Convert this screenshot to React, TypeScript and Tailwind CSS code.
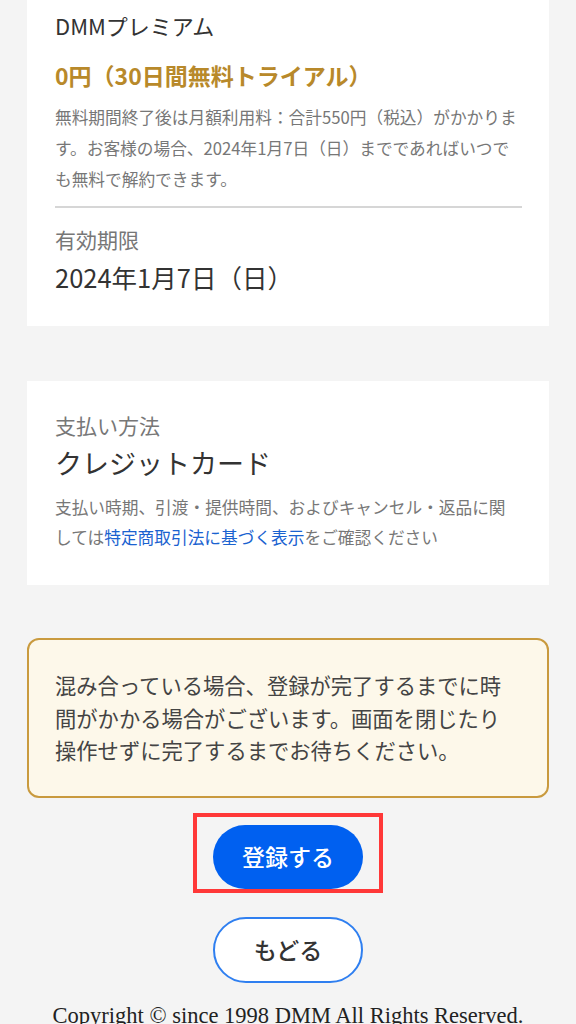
import React from "react";

const jp = { fontFamily: '"Noto Sans CJK JP", "Noto Sans", sans-serif' };

function Card({ children, className = "" }: { children: React.ReactNode; className?: string }) {
  return <section className={`mx-[27px] bg-white pl-[28px] pr-[27px] ${className}`}>{children}</section>;
}

export default function App() {
  return (
    <div className="min-h-[1024px] w-[576px] overflow-hidden bg-[#f4f4f4]" style={jp}>
      <Card className="pt-[10px] pb-[33px]">
        <h2 className="text-[22px] leading-[30px] text-[#333]">DMMプレミアム</h2>
        <p className="mt-[20px] text-[23px] font-bold leading-[30px] text-[#b8892a]">0円（30日間無料トライアル）</p>
        <p className="mt-[12px] text-[16.7px] leading-[31px] text-[#777]">
          無料期間終了後は月額利用料：合計550円（税込）がかかりま
          <br />
          す。お客様の場合、2024年1月7日（日）までであればいつで
          <br />
          も無料で解約できます。
        </p>
        <hr className="mt-[11px] border-t-2 border-[#d6d6d6]" />
        <p className="mt-[18px] text-[21px] leading-[26px] text-[#777]">有効期限</p>
        <p className="mt-[9px] text-[25.5px] leading-[32px] text-[#333]">2024年1月7日（日）</p>
      </Card>

      <Card className="mt-[55px] pt-[31px] pb-[33px]">
        <p className="text-[21px] leading-[26px] text-[#777]">支払い方法</p>
        <p className="mt-[8px] text-[27px] leading-[34px] text-[#333]">クレジットカード</p>
        <p className="mt-[12px] text-[16.7px] leading-[30px] text-[#777]">
          支払い時期、引渡・提供時間、およびキャンセル・返品に関
          <br />
          しては<span className="text-[#1a62d0]">特定商取引法に基づく表示</span>をご確認ください
        </p>
      </Card>

      <div className="mx-[27px] mt-[53px] rounded-[12px] border-2 border-[#c99a3e] bg-[#fdf8ea] pl-[26px] pr-[20px] pt-[29px] pb-[29px]">
        <p className="text-[21.3px] leading-[32.5px] text-[#444]">
          混み合っている場合、登録が完了するまでに時
          <br />
          間がかかる場合がございます。画面を閉じたり
          <br />
          操作せずに完了するまでお待ちください。
        </p>
      </div>

      <div className="mt-[27px] flex flex-col items-center">
        <div className="relative">
          <button
            type="button"
            className="flex h-[64px] w-[150px] items-center justify-center rounded-full bg-[#0060f0] text-[23px] font-medium text-white"
          >
            登録する
          </button>
          <div className="pointer-events-none absolute -left-[20px] -top-[12px] h-[80px] w-[190px] border-[4px] border-[#ff3838]" />
        </div>
        <button
          type="button"
          className="mt-[28px] flex h-[66px] w-[150px] items-center justify-center rounded-full border-2 border-[#2f7ff0] bg-white text-[23px] font-medium text-[#333]"
        >
          もどる
        </button>
        <p
          className="mt-[18px] whitespace-nowrap text-[22.5px] leading-[30px] text-[#222]"
          style={{ fontFamily: '"Liberation Serif", "DejaVu Serif", serif' }}
        >
          Copyright © since 1998 DMM All Rights Reserved.
        </p>
      </div>
    </div>
  );
}
